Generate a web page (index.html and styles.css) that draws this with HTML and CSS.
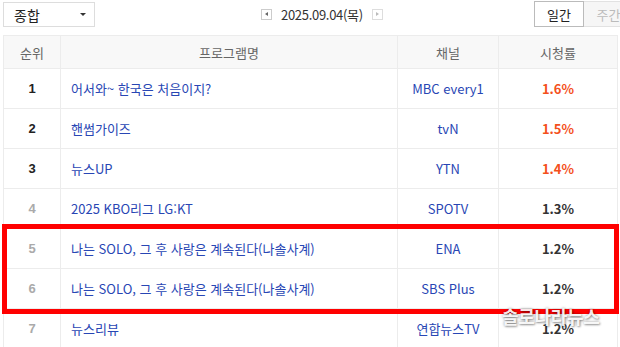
FILE: index.html
```html
<!DOCTYPE html>
<html lang="ko">
<head>
<meta charset="utf-8">
<link rel="stylesheet" href="styles.css">
</head>
<body>
<div class="page">
  <div class="topbar">
    <div class="select"><span>종합</span><span class="caret"></span></div>
    <div class="datebox">
      <span class="navbtn prev"></span>
      <span class="date">2025.09.04(목)</span>
      <span class="navbtn next"></span>
    </div>
    <div class="tabs">
      <span class="tab on">일간</span>
      <span class="tab">주간</span>
    </div>
  </div>
  <table class="rank">
    <colgroup>
      <col class="c1"><col class="c2"><col class="c3"><col class="c4">
    </colgroup>
    <thead>
      <tr><th>순위</th><th>프로그램명</th><th>채널</th><th>시청률</th></tr>
    </thead>
    <tbody>
      <tr><td class="no top">1</td><td class="prog">어서와~ 한국은 처음이지?</td><td class="ch">MBC every1</td><td class="rate hot">1.6%</td></tr>
      <tr><td class="no top">2</td><td class="prog">핸썸가이즈</td><td class="ch">tvN</td><td class="rate hot">1.5%</td></tr>
      <tr><td class="no top">3</td><td class="prog">뉴스UP</td><td class="ch">YTN</td><td class="rate hot">1.4%</td></tr>
      <tr><td class="no">4</td><td class="prog">2025 KBO리그 LG:KT</td><td class="ch">SPOTV</td><td class="rate">1.3%</td></tr>
      <tr><td class="no">5</td><td class="prog">나는 SOLO, 그 후 사랑은 계속된다(나솔사계)</td><td class="ch">ENA</td><td class="rate">1.2%</td></tr>
      <tr><td class="no">6</td><td class="prog">나는 SOLO, 그 후 사랑은 계속된다(나솔사계)</td><td class="ch">SBS Plus</td><td class="rate">1.2%</td></tr>
      <tr><td class="no">7</td><td class="prog">뉴스리뷰</td><td class="ch">연합뉴스TV</td><td class="rate">1.2%</td></tr>
    </tbody>
  </table>
  <div class="highlight"></div>
  <div class="watermark">솔로나라뉴스</div>
</div>
</body>
</html>
```
FILE: styles.css
```css
html, body {
  margin: 0;
  padding: 0;
  background: #fff;
}
body {
  font-family: "Noto Sans CJK KR", "Noto Sans", sans-serif;
  font-size: 13px;
  color: #333;
  width: 620px;
  height: 347px;
  overflow: hidden;
}
.page {
  position: relative;
  padding: 2px 0 0 3px;
}
.topbar {
  display: flex;
  align-items: flex-start;
  height: 33px;
  width: 631px;
}
.select {
  box-sizing: border-box;
  width: 92px;
  height: 25px;
  border: 1px solid #ddd;
  display: flex;
  align-items: center;
  justify-content: space-between;
  padding: 0 8px 0 10px;
  font-size: 14px;
  color: #222;
}
.caret {
  width: 0;
  height: 0;
  border-left: 3px solid transparent;
  border-right: 3px solid transparent;
  border-top: 3px solid #333;
}
.datebox {
  display: flex;
  align-items: center;
  height: 24px;
  margin-left: 166px;
  gap: 9px;
}
.date {
  font-size: 13px;
  color: #333;
  letter-spacing: -0.3px;
}
.navbtn {
  box-sizing: border-box;
  width: 11px;
  height: 11px;
  border: 1px solid #ccc;
  display: flex;
  align-items: center;
  justify-content: center;
}
.navbtn::after {
  content: "";
  width: 0;
  height: 0;
  border-top: 2.5px solid transparent;
  border-bottom: 2.5px solid transparent;
}
.prev::after { border-right: 3px solid #666; }
.next::after { border-left: 3px solid #bbb; }
.next { border-color: #ddd; }
.tabs {
  display: flex;
  margin-left: auto;
  margin-top: -1px;
  flex-shrink: 0;
}
.tab {
  box-sizing: border-box;
  width: 50px;
  height: 26px;
  display: flex;
  align-items: center;
  justify-content: center;
  border: 1px solid #e2e2e2;
  border-left: 0;
  background: #f6f6f6;
  color: #bbb;
  font-size: 13px;
}
.tab.on {
  border: 1px solid #bbb;
  background: #fff;
  color: #222;
}
.rank {
  border-collapse: collapse;
  table-layout: fixed;
  width: 614px;
}
.c1 { width: 57px; }
.c2 { width: 337px; }
.c3 { width: 101px; }
.c4 { width: 119px; }
.rank th, .rank td {
  border: 1px solid #ececec;
  padding: 0;
  text-align: center;
  white-space: nowrap;
  overflow: hidden;
}
.rank th {
  height: 32px;
  background: #f8f8f8;
  font-weight: normal;
  color: #666;
  font-size: 13px;
}
.rank td {
  height: 39px;
}
.rank td.no {
  font-family: "Liberation Sans", sans-serif;
  font-weight: bold;
  color: #aaa;
}
.rank td.no.top { color: #222; }
.rank td.prog {
  text-align: left;
  padding-left: 10px;
  color: #2846b4;
}
.rank td.ch { color: #2846b4; }
.rank td.rate {
  font-weight: bold;
  color: #333;
}
.rank td.rate.hot { color: #f4501c; }
.highlight {
  position: absolute;
  left: 2px;
  top: 224px;
  width: 607px;
  height: 80px;
  border: 5px solid #ff0000;
}
.watermark {
  position: absolute;
  left: 502px;
  top: 303px;
  font-size: 18px;
  font-weight: bold;
  color: rgba(255, 255, 255, 0.92);
  text-shadow: 0 0 3px rgba(0, 0, 0, 0.4), 1px 1px 2px rgba(0, 0, 0, 0.3);
  letter-spacing: -0.3px;
}
```
